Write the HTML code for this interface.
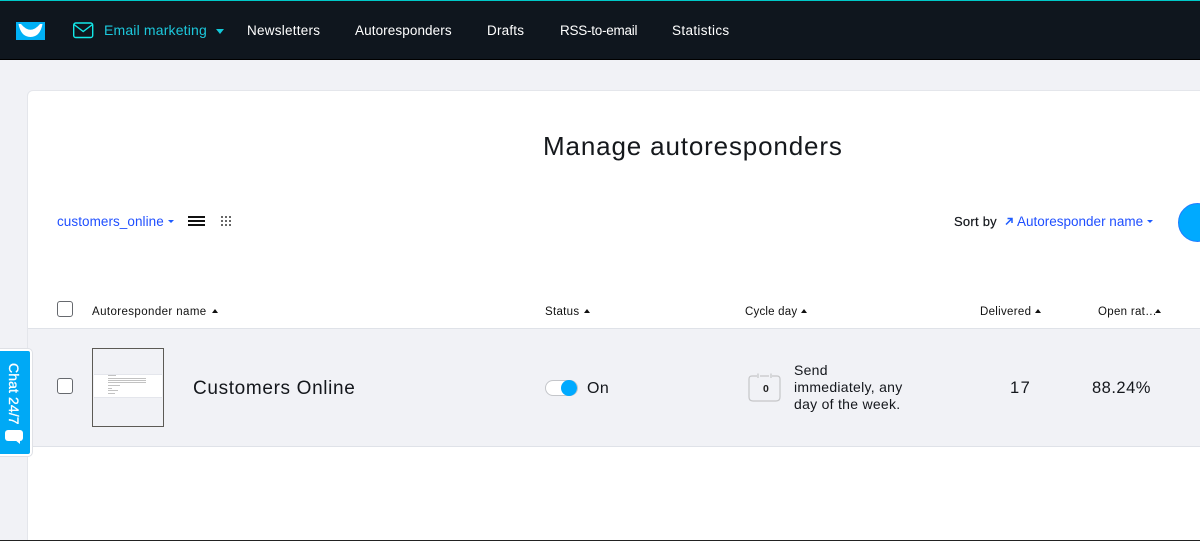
<!DOCTYPE html>
<html><head><meta charset="utf-8"><style>
html,body{margin:0;padding:0;height:541px;overflow:hidden}
body{width:1200px;position:relative;background:#f1f2f6;font-family:"Liberation Sans",sans-serif;color:#14171c}
.t{position:absolute;white-space:nowrap;line-height:1}
.a{position:absolute}
.nav{color:#fff;font-size:13.5px;top:24px}
.th{font-size:11.5px;top:307px;letter-spacing:.4px;color:#111}
.up{position:absolute;width:0;height:0;border-left:3.5px solid transparent;border-right:3.5px solid transparent;border-bottom:4px solid #111;top:309px}
.dn{position:absolute;width:0;height:0;border-left:3.5px solid transparent;border-right:3.5px solid transparent;border-top:3.5px solid #1f5cff}
.cb{position:absolute;left:57px;width:14px;height:14px;border:1px solid #66696e;border-radius:3px;background:#fff}
</style></head><body>
<div class="a" style="left:0;top:0;width:1200px;height:60px;background:#0f161e;border-top:1px solid #00c8c8;box-sizing:border-box;border-bottom:1px solid #000"></div>
<svg class="a" style="left:16px;top:22px" width="29" height="18" viewBox="0 0 29 18"><rect width="29" height="18" fill="#00b0f5"/><path d="M2.500 2L5 2Q14.500 13.500 24 2L26.500 2Q24 15 14.500 15Q5 15 2.500 2Z" fill="#fff"/></svg>
<svg class="a" style="left:73px;top:22px" width="21" height="17" viewBox="0 0 21 17" fill="none" stroke="#12e8e8" stroke-width="1.400"><rect x=".7" y="1" width="19" height="14.500" rx="2"/><path d="M1 2.500L10.200 9.500L19.500 2.500"/></svg>
<div class="t nav" style="left:104px;top:23px;color:#1cc8dc;font-size:14px;letter-spacing:.17px">Email marketing</div>
<div class="a" style="left:216px;top:29px;width:0;height:0;border-left:4px solid transparent;border-right:4px solid transparent;border-top:5px solid #12c9d9"></div>
<div class="t nav" style="left:247px;letter-spacing:.25px">Newsletters</div>
<div class="t nav" style="left:355px;letter-spacing:.1px">Autoresponders</div>
<div class="t nav" style="left:487px;letter-spacing:.2px">Drafts</div>
<div class="t nav" style="left:560px;letter-spacing:-.25px">RSS-to-email</div>
<div class="t nav" style="left:672px;letter-spacing:.35px">Statistics</div>

<div class="a" style="left:27px;top:90px;width:1190px;height:470px;background:#fff;border:1px solid #e4e6eb;border-radius:6px;box-sizing:border-box"></div>
<div class="t" style="left:543px;top:133px;font-size:26px;letter-spacing:.85px;color:#15181c">Manage autoresponders</div>

<div class="t" style="left:57px;top:215px;font-size:13.500px;letter-spacing:.06px;color:#1f4fff">customers_online</div>
<div class="dn" style="left:168px;top:220px"></div>
<div class="a" style="left:188px;top:216px;width:17px;height:2px;background:#111"></div>
<div class="a" style="left:188px;top:220px;width:17px;height:2px;background:#111"></div>
<div class="a" style="left:188px;top:224px;width:17px;height:2px;background:#111"></div>
<svg class="a" style="left:221px;top:216px" width="11" height="11" fill="#666"><rect x="0" y="0" width="2" height="2"/><rect x="4" y="0" width="2" height="2"/><rect x="8" y="0" width="2" height="2"/><rect x="0" y="4" width="2" height="2"/><rect x="4" y="4" width="2" height="2"/><rect x="8" y="4" width="2" height="2"/><rect x="0" y="8" width="2" height="2"/><rect x="4" y="8" width="2" height="2"/><rect x="8" y="8" width="2" height="2"/></svg>

<div class="t" style="left:954px;top:214.500px;font-size:13px;letter-spacing:.25px;color:#14171c;-webkit-text-stroke:.2px #14171c">Sort by</div>
<svg class="a" style="left:1005px;top:217px" width="8" height="8" viewBox="0 0 8 8" fill="none" stroke="#1f5cff" stroke-width="1.500"><path d="M1 7.500L6.500 2M2.500 1.500H7V6"/></svg>
<div class="t" style="left:1017px;top:215px;font-size:13.500px;color:#1f4fff">Autoresponder name</div>
<div class="dn" style="left:1147px;top:220px"></div>
<div class="a" style="left:1178px;top:203px;width:37px;height:37px;border-radius:50%;background:#00aaff;border:1px solid #1f7cff"></div>

<div class="cb" style="top:301px"></div>
<div class="t th" style="left:92px">Autoresponder name</div><div class="up" style="left:212px"></div>
<div class="t th" style="left:545px;letter-spacing:.3px">Status</div><div class="up" style="left:584px"></div>
<div class="t th" style="left:745px;letter-spacing:.2px">Cycle day</div><div class="up" style="left:801px"></div>
<div class="t th" style="left:980px;letter-spacing:.3px">Delivered</div><div class="up" style="left:1035px"></div>
<div class="t th" style="left:1098px;letter-spacing:.3px">Open rat…</div><div class="up" style="left:1155px"></div>

<div class="a" style="left:28px;top:328px;width:1172px;height:119px;background:#f1f2f6;border-top:1px solid #dfe2e8;border-bottom:1px solid #dfe2e8;box-sizing:border-box"></div>
<div class="cb" style="top:378px"></div>
<div class="a" style="left:92px;top:348px;width:72px;height:79px;border:1px solid #5c5a55;box-sizing:border-box;background:#f1f2f6">
<div class="a" style="left:1px;top:25px;width:68px;height:22px;background:#fff;border-top:1px solid #e4e6ec;border-bottom:1px solid #e4e6ec"></div>
<svg class="a" style="left:15px;top:26px" width="42" height="22" fill="#c2c2c2"><rect x="0" y="0" width="8" height="1"/><rect x="0" y="3" width="38" height="1"/><rect x="0" y="5" width="38" height="1"/><rect x="0" y="7" width="38" height="1"/><rect x="0" y="10" width="12" height="1"/><rect x="0" y="13" width="4" height="1"/><rect x="0" y="15" width="10" height="1"/><rect x="0" y="18" width="7" height="1"/></svg>
</div>
<div class="t" style="left:193px;top:379px;font-size:19px;letter-spacing:.65px">Customers Online</div>

<div class="a" style="left:545px;top:380px;width:33px;height:16px;border-radius:8px;background:#fff;border:1px solid #c4c6ca;box-sizing:border-box"></div>
<div class="a" style="left:561px;top:380px;width:16px;height:16px;border-radius:50%;background:#00aaff"></div>
<div class="t" style="left:587px;top:381px;font-size:16px;letter-spacing:.4px">On</div>

<svg class="a" style="left:748px;top:372px" width="33" height="30" viewBox="0 0 33 30" fill="none" stroke="#c5c6c8" stroke-width="1.200"><path d="M9 4H4Q1 4 1 7V25Q1 29 5 29H28Q32 29 32 25V7Q32 4 29 4H24M12 4H21M10 1.500V6M23 1.500V6"/></svg>
<div class="t" style="left:763px;top:384px;font-size:10.500px;font-weight:bold;color:#222">0</div>
<div class="t" style="left:794px;top:362px;font-size:14px;line-height:17px;letter-spacing:.28px;white-space:normal;width:125px">Send<br>immediately, any<br>day of the week.</div>

<div class="t" style="left:1010px;top:380px;font-size:16.500px;letter-spacing:1.500px">17</div>
<div class="t" style="left:1092px;top:380px;font-size:16.500px;letter-spacing:.5px">88.24%</div>

<div class="a" style="left:-6px;top:348px;width:39px;height:109px;background:#fff;border:1px solid #dfe1e6;border-radius:5px;box-sizing:border-box"></div>
<div class="a" style="left:0;top:351px;width:30px;height:103px;background:#00a9f5;border-radius:0 2px 2px 0"></div>
<div class="t" style="left:6px;top:363px;writing-mode:vertical-rl;color:#fff;font-size:14px;letter-spacing:.1px;-webkit-text-stroke:.3px #fff;width:16px;height:62px;line-height:16px">Chat 24/7</div>
<svg class="a" style="left:4px;top:429px" width="20" height="16" viewBox="0 0 20 16" fill="#fff"><rect x="1" y="1" width="18" height="11" rx="3"/><path d="M11 11H16V15Z"/></svg>

<div class="a" style="left:0;top:540px;width:1200px;height:1px;background:#222"></div>
</body></html>
